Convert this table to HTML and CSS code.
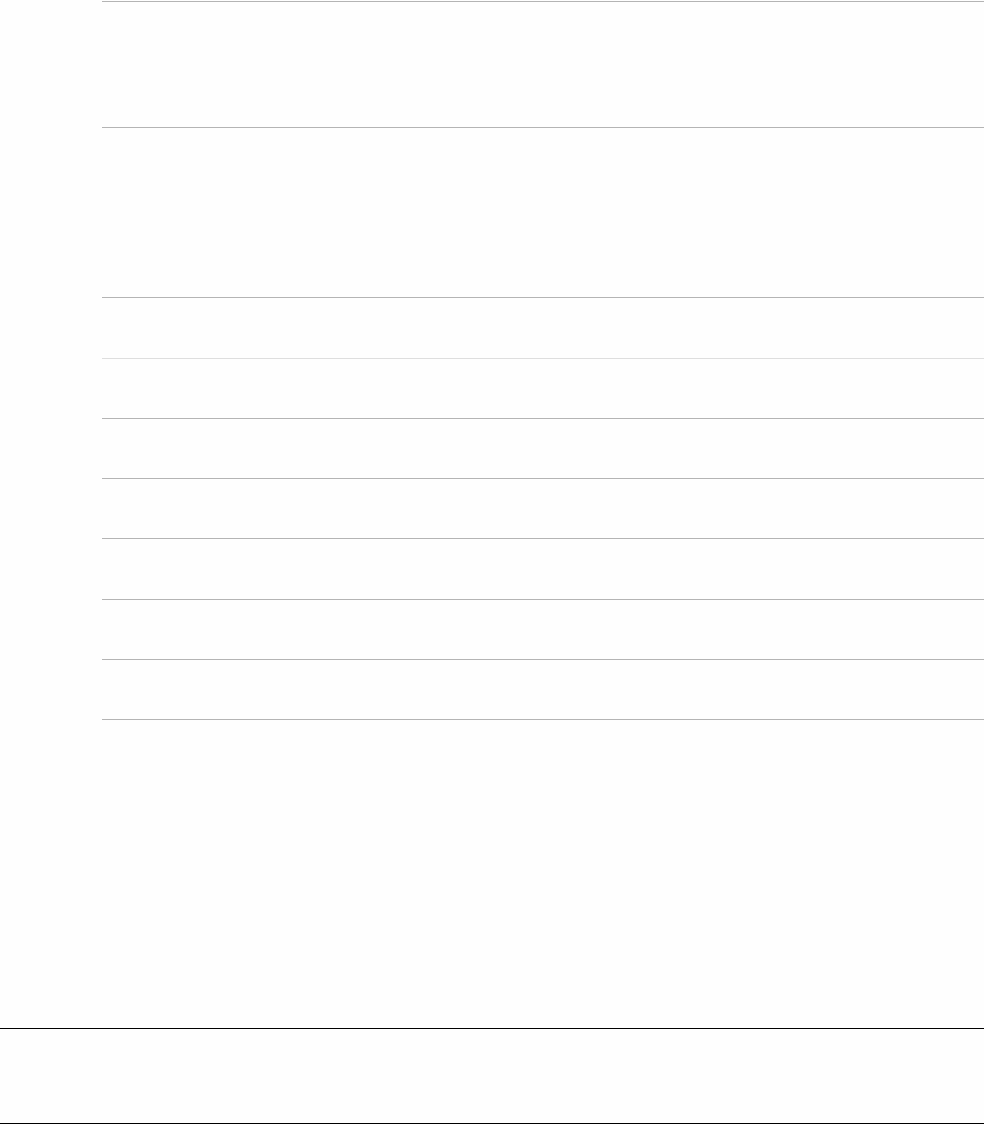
FILE: index.html
```html
<!DOCTYPE html>
<html lang="en">
<head>
  <meta charset="UTF-8">
  <meta name="viewport" content="width=device-width, initial-scale=1.0">
  <title>Listing</title>
  <link rel="stylesheet" href="styles.css">
</head>
<body>
  <div class="page">
    <div class="list">
      <div class="row row-head"></div>
      <div class="row row-intro"></div>
      <div class="row item light"></div>
      <div class="row item"></div>
      <div class="row item"></div>
      <div class="row item"></div>
      <div class="row item tall"></div>
      <div class="row item"></div>
      <div class="row item last"></div>
    </div>
  </div>
  <footer class="footer"></footer>
</body>
</html>
```
FILE: styles.css
```css
body {
  font-family: 'Liberation Sans', Arial, sans-serif;
  background-color: #fefefe;
  margin: 0;
  padding: 0;
}
.page {
  padding-top: 1px;
  height: 1028px;
  box-sizing: border-box;
}
.list {
  margin-left: 102px;
}
.row {
  border-top: 1px solid #b4b4b4;
  box-sizing: border-box;
  height: 60px;
}
.row-head {
  height: 126px;
}
.row-intro {
  height: 170px;
}
.row.light {
  height: 61px;
}
.row.tall {
  height: 61px;
}
.row.light + .row {
  border-top-color: #dedede;
}
.row.last {
  border-bottom: 1px solid #b4b4b4;
  height: 61px;
}
.footer {
  border-top: 1px solid #000;
  border-bottom: 1px solid #000;
  height: 96px;
  box-sizing: border-box;
}
```
